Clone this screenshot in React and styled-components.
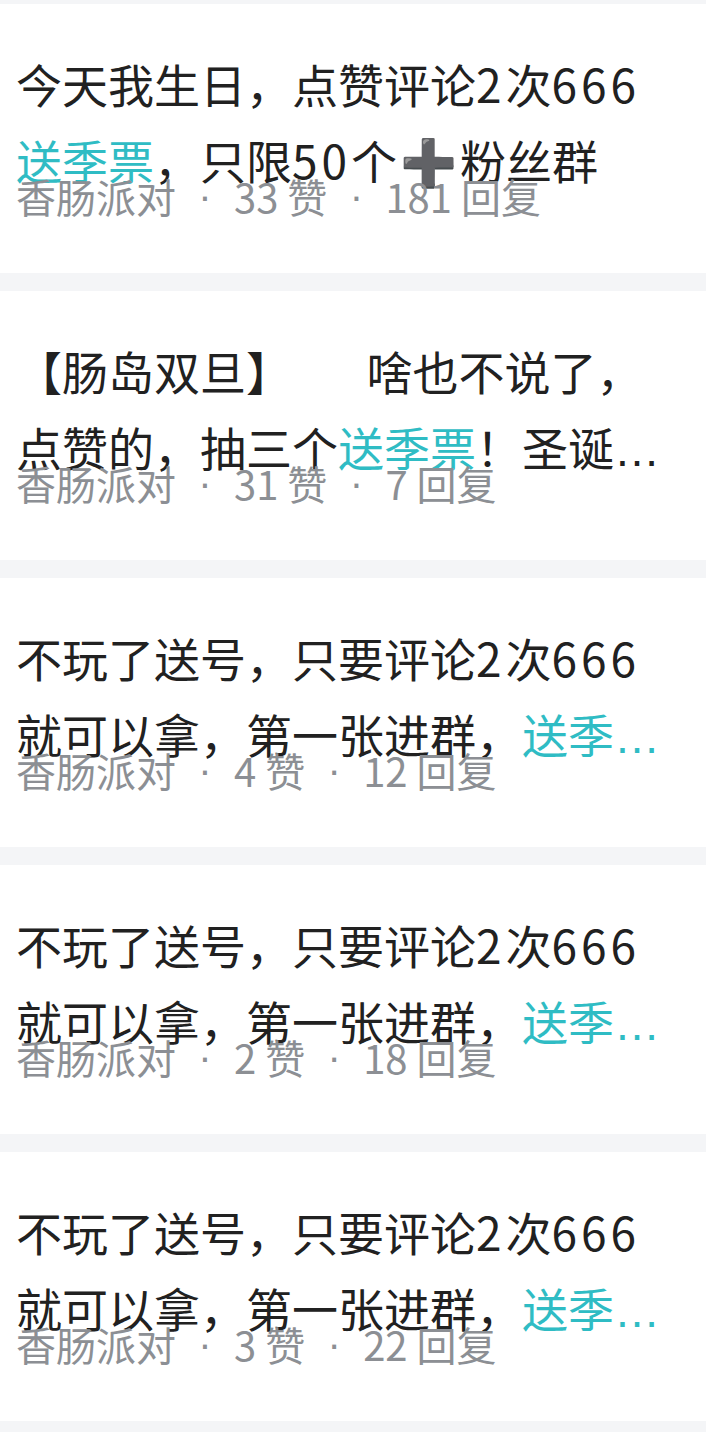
import React from "react";
import styled, { createGlobalStyle } from "styled-components";

const GlobalStyle = createGlobalStyle`
  html, body {
    margin: 0;
    padding: 0;
    background: #f4f5f7;
  }
  body {
    font-family: "Noto Sans CJK SC", "Noto Sans", sans-serif;
    -webkit-font-smoothing: antialiased;
  }
`;

const Feed = styled.main`
  display: flex;
  flex-direction: column;
  gap: 18px;
  padding: 4px 0 11px;
  background: #f4f5f7;
`;

const Card = styled.article`
  display: flex;
  flex-direction: column;
  background: #ffffff;
  padding: 41px 16px 57px;
`;

const Title = styled.h3`
  margin: 0;
  font-size: 46px;
  font-weight: 400;
  line-height: 76px;
  color: #212121;
`;

const TitleLine = styled.span`
  display: block;
  height: 76px;
  white-space: pre;
  overflow: hidden;
`;

const Highlight = styled.span`
  color: #2fbcc4;
`;

const Num = styled.span`
  letter-spacing: 4px;
`;

const Plus = styled.span`
  color: #4a4a4a;
  margin: 0 3px;
  line-height: 0;
`;

const Ellipsis = styled.span`
  font-family: "Liberation Sans", sans-serif;
  line-height: 0;
  letter-spacing: 1px;
`;

const Meta = styled.div`
  height: 40px;
  margin-top: -21px;
  font-size: 40px;
  line-height: 40px;
  color: #8c8f94;
  white-space: nowrap;
`;

const Dot = styled.span`
  display: inline-block;
  vertical-align: top;
  width: 40px;
  margin: 0 9px;
  text-align: center;
  font-family: "Liberation Sans", sans-serif;
`;

const posts = [
  {
    lines: [
      [{ t: "今天我生日，点赞评论" }, { t: "2", num: true }, { t: "次" }, { t: "666", num: true }],
      [
        { t: "送季票", hl: true },
        { t: "，只限" },
        { t: "50", num: true },
        { t: "个" },
        { t: "➕", plus: true },
        { t: "粉丝群" },
      ],
    ],
    likes: 33,
    replies: 181,
  },
  {
    lines: [
      [{ t: "【肠岛双旦】\u3000     啥也不说了，" }],
      [
        { t: "点赞的，抽三个" },
        { t: "送季票", hl: true },
        { t: "！圣诞" },
        { t: "…", ell: true },
      ],
    ],
    likes: 31,
    replies: 7,
  },
  {
    lines: [
      [{ t: "不玩了送号，只要评论" }, { t: "2", num: true }, { t: "次" }, { t: "666", num: true }],
      [{ t: "就可以拿，第一张进群，" }, { t: "送季", hl: true, ell: true }],
    ],
    likes: 4,
    replies: 12,
  },
  {
    lines: [
      [{ t: "不玩了送号，只要评论" }, { t: "2", num: true }, { t: "次" }, { t: "666", num: true }],
      [{ t: "就可以拿，第一张进群，" }, { t: "送季", hl: true, ell: true }],
    ],
    likes: 2,
    replies: 18,
  },
  {
    lines: [
      [{ t: "不玩了送号，只要评论" }, { t: "2", num: true }, { t: "次" }, { t: "666", num: true }],
      [{ t: "就可以拿，第一张进群，" }, { t: "送季", hl: true, ell: true }],
    ],
    likes: 3,
    replies: 22,
  },
];

function Segment({ seg }) {
  if (seg.hl) {
    return (
      <Highlight>
        {seg.t}
        {seg.ell && <Ellipsis>…</Ellipsis>}
      </Highlight>
    );
  }
  if (seg.ell) return <Ellipsis>{seg.t}</Ellipsis>;
  if (seg.num) return <Num>{seg.t}</Num>;
  if (seg.plus) return <Plus>{seg.t}</Plus>;
  return <>{seg.t}</>;
}

export default function App() {
  return (
    <>
      <GlobalStyle />
      <Feed>
        {posts.map((p, i) => (
          <Card key={i}>
            <Title>
              {p.lines.map((line, j) => (
                <TitleLine key={j}>
                  {line.map((seg, k) => (
                    <Segment key={k} seg={seg} />
                  ))}
                </TitleLine>
              ))}
            </Title>
            <Meta>
              香肠派对<Dot>·</Dot>
              {p.likes} 赞<Dot>·</Dot>
              {p.replies} 回复
            </Meta>
          </Card>
        ))}
      </Feed>
    </>
  );
}
